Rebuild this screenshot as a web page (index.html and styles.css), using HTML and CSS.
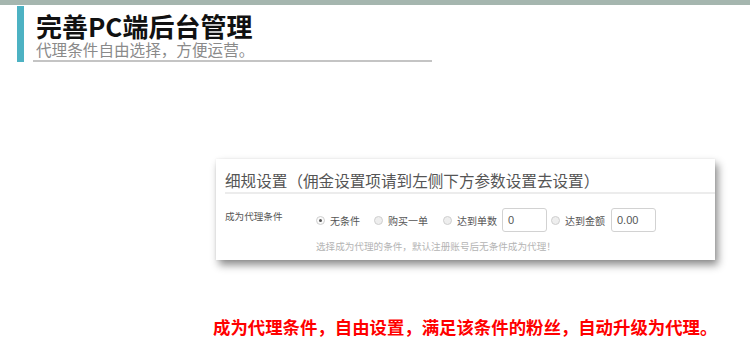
FILE: index.html
```html
<!DOCTYPE html>
<html lang="zh">

<head>
    <meta charset="UTF-8">
    <meta name="viewport" content="width=device-width, initial-scale=1.0">
    <title>完善PC端后台管理</title>
    <link rel="stylesheet" href="styles.css">
</head>

<body>
    <div class="top-bar"></div>

    <header class="intro">
        <div class="intro-inner">
            <h1 class="intro-title">完善PC端后台管理</h1>
            <p class="intro-sub">代理条件自由选择，方便运营。</p>
        </div>
    </header>

    <!-- The settings panel -->
    <section class="panel">
        <h2 class="panel-title">细规设置（佣金设置项请到左侧下方参数设置去设置）</h2>
        <div class="panel-row">
            <span class="row-label">成为代理条件</span>
            <div class="options">
                <span class="radio checked"></span><span class="opt-text gap-a">无条件</span>
                <span class="radio"></span><span class="opt-text gap-b">购买一单</span>
                <span class="radio"></span><span class="opt-text gap-c">达到单数</span>
                <span class="field gap-d">0</span>
                <span class="radio"></span><span class="opt-text gap-e">达到金额</span>
                <span class="field">0.00</span>
            </div>
        </div>
        <p class="panel-hint">选择成为代理的条件，默认注册账号后无条件成为代理！</p>
    </section>

    <p class="note">成为代理条件，自由设置，满足该条件的粉丝，自动升级为代理。</p>
</body>

</html>
```

FILE: styles.css
```css
/* Base page */
body {
    margin: 0;
    padding: 0;
    background-color: #fff;
    font-family: "Noto Sans CJK SC", "Noto Sans", sans-serif;
    width: 750px;
    overflow: hidden;
}

.top-bar {
    height: 5px;
    background-color: #a5b6af;
}

/* The intro header */
.intro {
    margin: 1px 0 0 17px;
    border-left: 7px solid #4db2c3;
    height: 56px;
}

.intro-inner {
    margin-left: 9px;
    width: 399px;
    border-bottom: 2px solid #c4c4c4;
    padding: 5px 0 1px 3px;
    box-sizing: border-box;
}

.intro-title {
    margin: 0;
    font-size: 26px;
    line-height: 29px;
    font-weight: bold;
    color: #111;
}

.intro-sub {
    margin: 0;
    font-size: 15.6px;
    line-height: 19px;
    color: #8a8a8a;
}

/* The settings panel */
.panel {
    margin: 97px 0 0 216px;
    width: 499px;
    height: 101px;
    background-color: #fff;
    box-shadow: 3px 5px 8px rgba(0, 0, 0, 0.45), 0 0 2px rgba(0, 0, 0, 0.08);
}

.panel-title {
    margin: 0 0 0 9px;
    padding: 10px 0 1px 0;
    font-size: 15.6px;
    line-height: 22px;
    font-weight: normal;
    color: #555;
    border-bottom: 2px solid #ececec;
}

.panel-row {
    display: flex;
    padding-top: 14px;
}

.row-label {
    width: 91px;
    padding-left: 9px;
    margin-top: 3px;
    font-size: 9.6px;
    line-height: 11px;
    color: #555;
}

.options {
    display: flex;
    align-items: center;
    height: 24px;
    font-size: 10px;
    color: #555;
}

.radio {
    width: 7px;
    height: 7px;
    border: 1px solid #cfcfcf;
    border-radius: 50%;
    background-color: #eee;
    margin-right: 5px;
    position: relative;
}

.radio.checked {
    background-color: #fafafa;
}

.radio.checked::after {
    content: "";
    position: absolute;
    left: 2px;
    top: 2px;
    width: 3px;
    height: 3px;
    border-radius: 50%;
    background-color: #555;
}

.gap-a { margin-right: 14px; }
.gap-b { margin-right: 15px; }
.gap-c { margin-right: 5px; }
.gap-d { margin-right: 4px; }
.gap-e { margin-right: 6px; }

.field {
    width: 45px;
    height: 24px;
    box-sizing: border-box;
    border: 1px solid #d2d2d2;
    border-radius: 3px;
    padding-left: 5px;
    font-family: "Liberation Sans", sans-serif;
    font-size: 11px;
    line-height: 22px;
    color: #555;
}

.panel-hint {
    margin: 8px 0 0 100px;
    font-size: 9.6px;
    line-height: 12px;
    color: #b4b4b4;
}

/* The red note at the bottom */
.note {
    margin: 57px 0 0 213px;
    font-size: 17.4px;
    line-height: 20px;
    font-weight: bold;
    color: #f00;
    white-space: nowrap;
}
```
